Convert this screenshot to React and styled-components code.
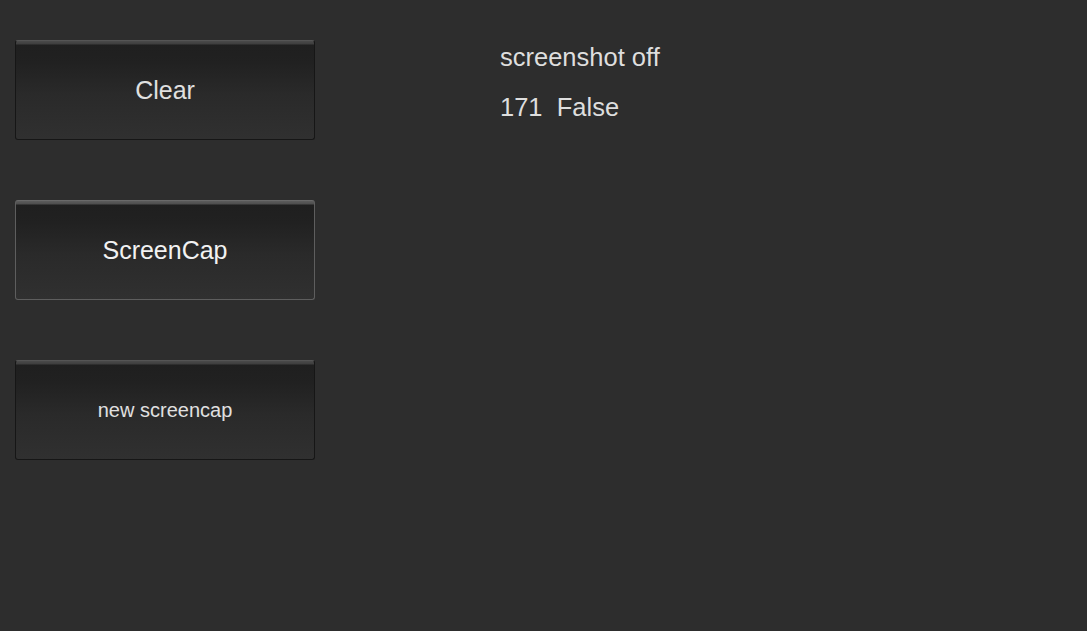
import React from "react";
import styled, { createGlobalStyle } from "styled-components";

const Global = createGlobalStyle`
  html, body { margin: 0; padding: 0; background: #2d2d2d; }
  body { font-family: "Liberation Sans", Arial, sans-serif; }
`;

const Page = styled.div`
  width: 1087px;
  height: 631px;
  background: #2d2d2d;
  display: flex;
  box-sizing: border-box;
  padding: 40px 0 0 15px;
`;

const ButtonColumn = styled.div`
  display: flex;
  flex-direction: column;
  gap: 60px;
  width: 300px;
`;

const Button = styled.button`
  width: 300px;
  height: 100px;
  box-sizing: border-box;
  border-radius: 3px;
  border: 1px solid ${(p) => (p.$active ? "#5e5e5e" : "#161616")};
  border-top-color: ${(p) => (p.$active ? "#6a6a6a" : "#555555")};
  background: linear-gradient(
    to bottom,
    ${(p) => (p.$active ? "#5c5c5c" : "#4a4a4a")} 0px,
    ${(p) => (p.$active ? "#4e4e4e" : "#3e3e3e")} 3px,
    #1f1f1f 4px,
    #212121 22%,
    #2a2a2a 55%,
    #303030 100%
  );
  color: ${(p) => (p.$active ? "#f2f2f2" : "#e0e0e0")};
  font-family: "Liberation Sans", Arial, sans-serif;
  font-size: ${(p) => p.$size || 25}px;
  line-height: 30px;
  padding: 0;
  display: flex;
  align-items: center;
  justify-content: center;
  cursor: pointer;
`;

const Info = styled.div`
  margin-left: 185px;
  padding-top: 3px;
  display: flex;
  flex-direction: column;
  gap: 21px;
`;

const InfoLine = styled.div`
  color: #dedede;
  font-size: 25.5px;
  line-height: 29px;
  white-space: pre;
`;

export default function App() {
  return (
    <>
      <Global />
      <Page>
        <ButtonColumn>
          <Button>Clear</Button>
          <Button $active>ScreenCap</Button>
          <Button $size={20}>new screencap</Button>
        </ButtonColumn>
        <Info>
          <InfoLine>screenshot off</InfoLine>
          <InfoLine>{"171  False"}</InfoLine>
        </Info>
      </Page>
    </>
  );
}
